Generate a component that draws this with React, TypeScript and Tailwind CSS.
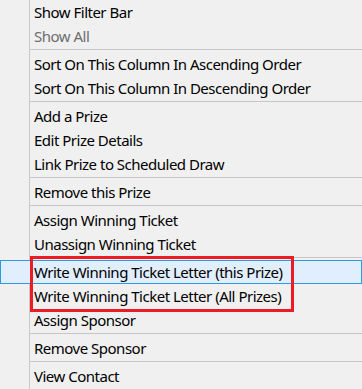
import React from "react";

type Item = { label?: string; sep?: boolean; disabled?: boolean; hot?: boolean };

const items: Item[] = [
  { label: "Show Filter Bar" },
  { label: "Show All", disabled: true },
  { sep: true },
  { label: "Sort On This Column In Ascending Order" },
  { label: "Sort On This Column In Descending Order" },
  { sep: true },
  { label: "Add a Prize" },
  { label: "Edit Prize Details" },
  { label: "Link Prize to Scheduled Draw" },
  { sep: true },
  { label: "Remove this Prize" },
  { sep: true },
  { label: "Assign Winning Ticket" },
  { label: "Unassign Winning Ticket" },
  { sep: true },
  { label: "Write Winning Ticket Letter (this Prize)", hot: true },
  { label: "Write Winning Ticket Letter (All Prizes)" },
  { label: "Assign Sponsor" },
  { sep: true },
  { label: "Remove Sponsor" },
  { sep: true },
  { label: "View Contact" },
];

export default function App() {
  return (
    <div
      className="relative w-[362px] h-[389px] overflow-hidden bg-[#f0f0f0] bg-[linear-gradient(to_right,#f0f0f0_29px,#c9c9c9_29px,#c9c9c9_30px,#f0f0f0_30px)] text-[15px] tracking-[-0.5px] text-black"
      style={{ fontFamily: '"Noto Sans", "Open Sans", sans-serif' }}
    >
      <div className="flex flex-col">
        {items.map((it, i) =>
          it.sep ? (
            <div key={i} className="h-[4px] pt-[1px] pl-[30px]">
              <div className="h-px bg-[#c6c6c6]" />
            </div>
          ) : it.hot ? (
            <div
              key={i}
              className="h-6 flex items-center pl-[33px] border border-[#2a9de0] bg-[#e0eefd] whitespace-nowrap"
            >
              {it.label}
            </div>
          ) : (
            <div
              key={i}
              className={`h-6 flex items-center pl-[34px] whitespace-nowrap ${it.disabled ? "text-[#6d6d6d]" : ""}`}
            >
              {it.label}
            </div>
          )
        )}
      </div>
      <div className="absolute left-[30px] top-[256px] w-[264px] h-[56px] border-[3px] border-[#ec1c24]" />
    </div>
  );
}
